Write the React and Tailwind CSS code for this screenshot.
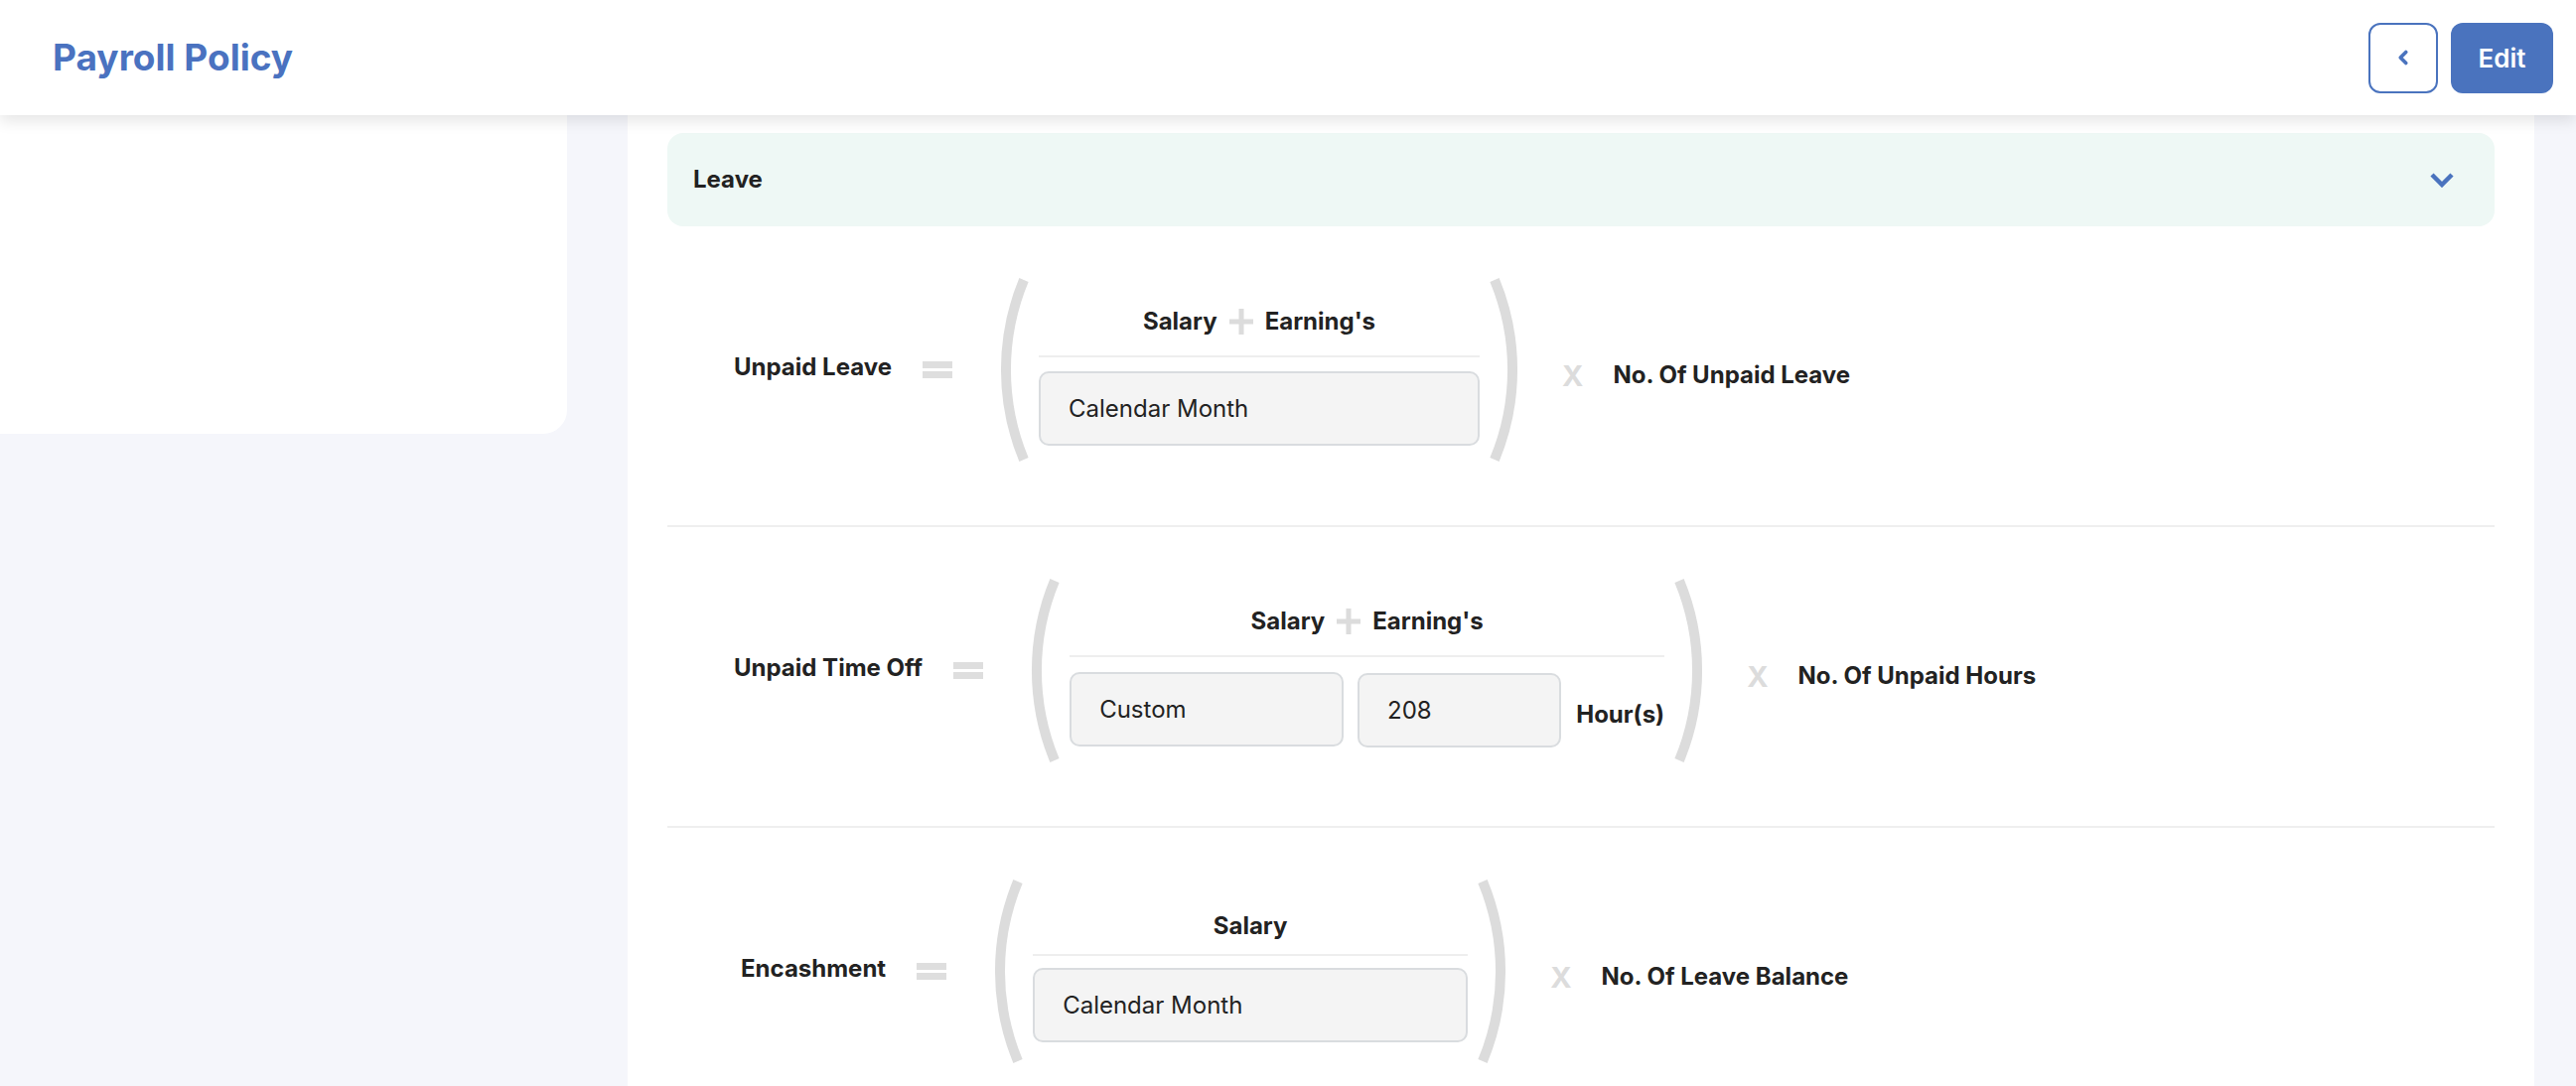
import { ChevronLeft } from 'lucide-react'

const FONT = { fontFamily: 'Inter, Lato, "Liberation Sans", sans-serif' }

// ── tall light-grey bracket used round the fraction ─────────────────────────
function Paren({ flip = false }) {
  return (
    <svg
      width="31"
      height="187"
      viewBox="0 0 31 187"
      className={flip ? 'shrink-0 -scale-x-100' : 'shrink-0'}
    >
      <path d="M25 3 A 236 236 0 0 0 25 184" fill="none" stroke="#dcdcdc" strokeWidth="10" />
    </svg>
  )
}

function Equals() {
  return (
    <div className="flex flex-col gap-[3px] shrink-0 w-[30px]">
      <div className="h-[7px] bg-[#dedede]" />
      <div className="h-[7px] bg-[#dedede]" />
    </div>
  )
}

function Plus() {
  return (
    <svg width="24" height="26" viewBox="0 0 24 26" className="shrink-0">
      <rect x="9.5" y="0" width="5" height="26" fill="#dcdcdc" />
      <rect x="0" y="10.5" width="24" height="5" fill="#dcdcdc" />
    </svg>
  )
}

function Box({ children }) {
  return (
    <div className="h-[75px] rounded-[10px] border-2 border-[#d9dcdf] bg-[#f4f4f4] flex items-center pl-[28px] text-[24px] text-[#222]">
      <span>{children}</span>
    </div>
  )
}

function FormulaRow({ label, top, bottom, result, last = false, width, compact = false, shift = false }) {
  return (
    <div
      className={`flex items-center pt-[51px] pb-[63px] ${shift ? 'pl-[74px]' : 'pl-[67px]'} ${last ? '' : 'border-b-2 border-[#efefef]'}`}
    >
      <span className="text-[24px] font-bold text-[#222] whitespace-nowrap -mt-[6px]">{label}</span>
      <div className="ml-[31px]">
        <Equals />
      </div>
      <div className="ml-[47px] flex items-center">
        <Paren />
        <div className={`mx-[9px] flex flex-col ${compact ? 'mt-[11px]' : 'mt-[13px]'}`} style={{ width }}>
          <div className="h-[30px] flex items-center justify-center gap-[12px] text-[24px] font-bold text-[#222] leading-[30px]">
            {top}
          </div>
          <div className={`h-[2px] bg-[#eeeeee] ${compact ? 'mt-[13px]' : 'mt-[19px]'}`} />
          <div className={compact ? 'mt-[12px]' : 'mt-[14px]'}>{bottom}</div>
        </div>
        <Paren flip />
      </div>
      <div className="ml-[43px] mt-[11px] flex items-center">
        <span className="text-[29px] font-bold text-[#dcdcdc] leading-none">X</span>
        <span className="ml-[30px] text-[24px] font-bold text-[#222] whitespace-nowrap">{result}</span>
      </div>
    </div>
  )
}

const salaryEarnings = (
  <>
    <span>Salary</span>
    <Plus />
    <span>Earning's</span>
  </>
)

export default function App() {
  return (
    <div className="min-h-[1094px] bg-[#f5f6fb] flex flex-col" style={FONT}>
      {/* Header */}
      <header className="relative z-10 h-[116px] bg-white shadow-[0_6px_14px_rgba(0,0,0,0.10)] flex items-center justify-between pl-[53px] pr-[23px]">
        <h1 className="text-[37px] font-bold text-[#4a72c0]">Payroll Policy</h1>
        <div className="flex items-center gap-[13px]">
          <button className="w-[70px] h-[71px] rounded-[12px] border-2 border-[#4a73be] flex items-center justify-center bg-white">
            <ChevronLeft size={22} strokeWidth={4} color="#4a73be" />
          </button>
          <button className="w-[103px] h-[71px] rounded-[12px] bg-[#4a73be] text-white text-[26px] font-semibold">
            Edit
          </button>
        </div>
      </header>

      {/* Body */}
      <div className="flex flex-1">
        <aside className="w-[571px] h-[321px] bg-white rounded-br-[24px] shrink-0" />
        <main className="ml-[61px] mr-[42px] flex-1 bg-white px-[40px] pt-[18px]">
          <div className="h-[94px] rounded-[16px] bg-[#eef8f5] flex items-center justify-between pl-[26px] pr-[40px]">
            <span className="text-[24px] font-bold text-[#222]">Leave</span>
            <svg width="26" height="16" viewBox="0 0 26 16">
              <path d="M3 3 L13 13 L23 3" fill="none" stroke="#4a73be" strokeWidth="4.5" />
            </svg>
          </div>

          <FormulaRow
            label="Unpaid Leave"
            width={444}
            top={salaryEarnings}
            bottom={<Box>Calendar Month</Box>}
            result="No. Of Unpaid Leave"
          />

          <FormulaRow
            label="Unpaid Time Off"
            width={599}
            top={salaryEarnings}
            bottom={
              <div className="flex items-center">
                <div className="w-[277px]">
                  <Box>Custom</Box>
                </div>
                <div className="w-[206px] ml-[14px] mt-[2px]">
                  <Box>208</Box>
                </div>
                <span className="ml-[15px] mt-[10px] text-[24px] font-bold text-[#222]">Hour(s)</span>
              </div>
            }
            result="No. Of Unpaid Hours"
          />

          <FormulaRow
            label="Encashment"
            width={438}
            top={<span>Salary</span>}
            bottom={<Box>Calendar Month</Box>}
            result="No. Of Leave Balance"
            compact
            shift
            last
          />
        </main>
      </div>
    </div>
  )
}
